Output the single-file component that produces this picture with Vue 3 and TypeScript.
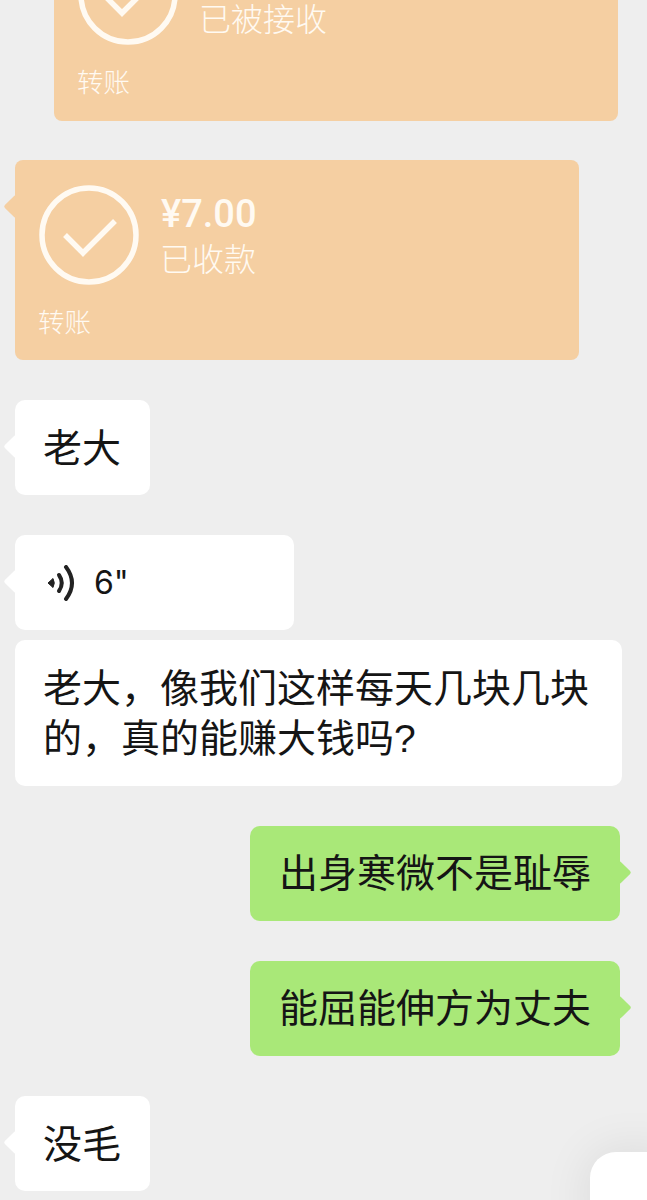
<script setup lang="ts">
const cards = [
  { amount: "¥7.00", status: "已被接收", offset: true },
  { amount: "¥7.00", status: "已收款", offset: false }
];
</script>

<template>
  <div class="chat">
    <div class="thread">
      <div
        v-for="card in cards"
        :key="card.status"
        class="bubble-tail card"
        :class="{ 'card-offset': card.offset }"
      >
        <div class="card-main">
          <svg class="check" viewBox="0 0 100 100" width="100" height="100" fill="none">
            <circle cx="50" cy="50" r="47" stroke="#fffaf2" stroke-width="5.5" />
            <path d="M26 50 L44 68 L76 36" stroke="#fffaf2" stroke-width="5.5" />
          </svg>
          <div class="card-text">
            <div class="amount">{{ card.amount }}</div>
            <div class="status">{{ card.status }}</div>
          </div>
        </div>
        <div class="card-label">转账</div>
      </div>

      <div class="bubble-tail bubble short">老大</div>

      <div class="bubble-tail bubble voice">
        <svg class="voice-icon" viewBox="0 0 28 36" width="28" height="36" fill="none">
          <path d="M1 18 L6 13.5 Q8.5 18 6 22.5 Z" fill="#222" stroke="#222" stroke-linejoin="round" />
          <path d="M12 10 Q17.5 18 12 26" stroke="#222" stroke-width="4" stroke-linecap="round" />
          <path d="M19 2 Q31 18 19 34" stroke="#222" stroke-width="4" stroke-linecap="round" />
        </svg>
        <span class="voice-time">6"</span>
      </div>

      <div class="bubble long">老大，像我们这样每天几块几块的，真的能赚大钱吗?</div>

      <div class="bubble-tail bubble mine">出身寒微不是耻辱</div>
      <div class="bubble-tail bubble mine">能屈能伸方为丈夫</div>

      <div class="bubble-tail bubble short">没毛</div>
    </div>

    <div class="corner"></div>
  </div>
</template>

<style scoped>
.chat {
  position: relative;
  width: 647px;
  height: 1200px;
  overflow: hidden;
  background: #eeeeee;
  font-family: "Liberation Sans", "Noto Sans CJK SC", sans-serif;
  color: #151515;
}

.thread {
  display: flex;
  flex-direction: column;
  align-items: flex-start;
  gap: 39px;
  margin-top: -80px;
  padding: 0 27px 0 15px;
}

.bubble-tail {
  position: relative;
}

.bubble-tail::before {
  content: "";
  position: absolute;
  top: 38px;
  left: -8px;
  width: 17px;
  height: 17px;
  border-radius: 2px;
  background: inherit;
  transform: rotate(45deg);
}

.card {
  box-sizing: border-box;
  width: 564px;
  height: 200px;
  padding: 25px 24px 0;
  border-radius: 8px;
  background: #f5cfa2;
  color: #fffaf2;
}

.card-offset {
  height: 201px;
  margin-left: 39px;
}

.card-main {
  display: flex;
  gap: 23px;
  height: 117px;
}

.check {
  flex: none;
}

.amount {
  margin-top: 7px;
  margin-left: -1px;
  font-family: Roboto, sans-serif;
  font-size: 38px;
  font-weight: 500;
  line-height: 44px;
}

.status {
  margin-left: -2px;
  font-family: "Noto Sans CJK SC", sans-serif;
  font-size: 32px;
  font-weight: 300;
  line-height: 43px;
}

.card-label {
  margin-left: -1px;
  font-family: "Noto Sans CJK SC", sans-serif;
  font-size: 26.5px;
  font-weight: 300;
  line-height: 38px;
}

.bubble {
  box-sizing: border-box;
  padding: 24px 28px 22px;
  border-radius: 10px;
  background: #fff;
  font-size: 39px;
  line-height: 50px;
}

.bubble-tail.bubble {
  margin-top: 1px;
}

.short {
  width: 135px;
  height: 95px;
}

.voice {
  display: flex;
  align-items: center;
  gap: 19px;
  width: 279px;
  height: 95px;
  padding: 0 32px;
}

.voice-icon {
  flex: none;
}

.voice-time {
  font-family: Inter, sans-serif;
  font-size: 32px;
}

.long {
  width: 607px;
  margin-top: -29px;
}

.mine {
  align-self: flex-end;
  width: 370px;
  height: 95px;
  padding: 23px 29px;
  background: #a9e878;
  white-space: nowrap;
}

.mine::before {
  left: auto;
  right: -8px;
}

.corner {
  position: absolute;
  top: 1152px;
  left: 590px;
  width: 80px;
  height: 80px;
  border-top-left-radius: 26px;
  background: #fff;
  box-shadow: 0 0 50px rgba(0, 0, 0, 0.09);
}
</style>
